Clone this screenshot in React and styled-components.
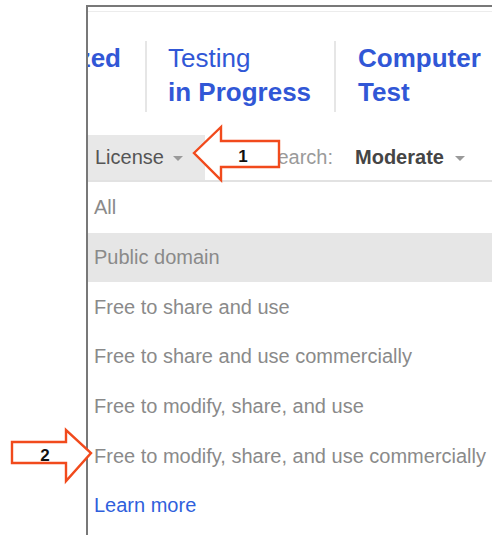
import React from "react";
import styled, { createGlobalStyle } from "styled-components";

const Global = createGlobalStyle`
  html, body {
    margin: 0;
    padding: 0;
    background: #ffffff;
    font-family: "Liberation Sans", Arial, sans-serif;
  }
  #root {
    position: relative;
    width: 492px;
    height: 535px;
    overflow: hidden;
  }
`;

const Frame = styled.div`
  margin: 5px 0 0 86px;
  height: 530px;
  border-left: 2px solid #787878;
  border-top: 2px solid #787878;
  overflow: hidden;
  box-sizing: border-box;
`;

const TopRule = styled.div`
  margin-top: 4px;
  border-top: 1px solid #ececec;
`;

const Tabs = styled.div`
  display: flex;
  margin-top: 29px;
`;

const Tab = styled.div`
  display: flex;
  flex-direction: column;
  justify-content: flex-start;
  align-items: ${(p) => (p.$clipped ? "flex-end" : "flex-start")};
  width: ${(p) => (p.$width ? `${p.$width}px` : "auto")};
  overflow: hidden;
  padding: 0 ${(p) => p.$padRight}px 3px ${(p) => p.$padLeft}px;
  box-sizing: border-box;
  flex-shrink: 0;
  & + & {
    border-left: 2px solid #e6e6e6;
  }
`;

const TabLine = styled.span`
  display: block;
  white-space: nowrap;
  font-size: 26px;
  line-height: 34px;
  color: #3157d6;
  font-weight: ${(p) => (p.$bold ? 700 : 400)};
`;

const Toolbar = styled.div`
  display: flex;
  align-items: center;
  height: 45px;
  margin-top: 23px;
  border-bottom: 2px solid #e2e2e2;
`;

const DropButton = styled.div`
  display: flex;
  align-items: center;
  gap: 9px;
  height: 100%;
  padding: 0 22px 0 7px;
  background: #e8e8e8;
  font-size: 20px;
  color: #555555;
`;

const Caret = styled.span`
  width: 0;
  height: 0;
  border-left: 5px solid transparent;
  border-right: 5px solid transparent;
  border-top: 5px solid #9a9a9a;
  margin-top: 2px;
`;

const Label = styled.span`
  margin-left: 18px;
  font-size: 20px;
  color: #9a9a9a;
`;

const Select = styled.div`
  display: flex;
  align-items: center;
  gap: 11px;
  margin-left: 22px;
  font-size: 20px;
  font-weight: 700;
  color: #454545;
`;

const Menu = styled.div`
  display: flex;
  flex-direction: column;
  padding-top: 1px;
`;

const Item = styled.div`
  display: flex;
  align-items: center;
  height: 49.7px;
  padding-left: 6px;
  font-size: 20px;
  white-space: nowrap;
  color: ${(p) => (p.$link ? "#2f5fdc" : "#8a8a8a")};
  background: ${(p) => (p.$active ? "#e6e6e6" : "transparent")};
`;

const Callouts = styled.svg`
  position: absolute;
  left: 0;
  top: 0;
  pointer-events: none;
`;

const Callout = ({ points, label, lx, ly }) => (
  <g>
    <polygon
      points={points}
      fill="#ffffff"
      stroke="#f14a1c"
      strokeWidth="2.4"
      strokeLinejoin="miter"
    />
    <text
      x={lx}
      y={ly}
      textAnchor="middle"
      dominantBaseline="central"
      fontFamily="'Liberation Sans', Arial, sans-serif"
      fontWeight="700"
      fontSize="17"
      fill="#111111"
    >
      {label}
    </text>
  </g>
);

const licenses = [
  "All",
  "Public domain",
  "Free to share and use",
  "Free to share and use commercially",
  "Free to modify, share, and use",
  "Free to modify, share, and use commercially",
];

export default function App() {
  return (
    <>
      <Global />
      <Frame>
        <TopRule />
        <Tabs>
          <Tab $clipped $width={57} $padLeft={0} $padRight={24}>
            <TabLine $bold>Finalized</TabLine>
          </Tab>
          <Tab $padLeft={21} $padRight={23}>
            <TabLine>Testing</TabLine>
            <TabLine $bold>in Progress</TabLine>
          </Tab>
          <Tab $padLeft={22} $padRight={22}>
            <TabLine $bold>Computer</TabLine>
            <TabLine $bold>Test</TabLine>
          </Tab>
        </Tabs>
        <Toolbar>
          <DropButton>
            License
            <Caret />
          </DropButton>
          <Label>SafeSearch:</Label>
          <Select>
            Moderate
            <Caret />
          </Select>
        </Toolbar>
        <Menu>
          {licenses.map((name, i) => (
            <Item key={name} $active={i === 1}>
              {name}
            </Item>
          ))}
          <Item $link>Learn more</Item>
        </Menu>
      </Frame>
      <Callouts width="492" height="535" viewBox="0 0 492 535">
        <Callout
          points="194,153 221,127 221,141 279,141 279,167 221,167 221,180"
          label="1"
          lx={243}
          ly={156}
        />
        <Callout
          points="12,442 66,442 66,430 91,453 66,481 66,463 12,463"
          label="2"
          lx={45}
          ly={455}
        />
      </Callouts>
    </>
  );
}
